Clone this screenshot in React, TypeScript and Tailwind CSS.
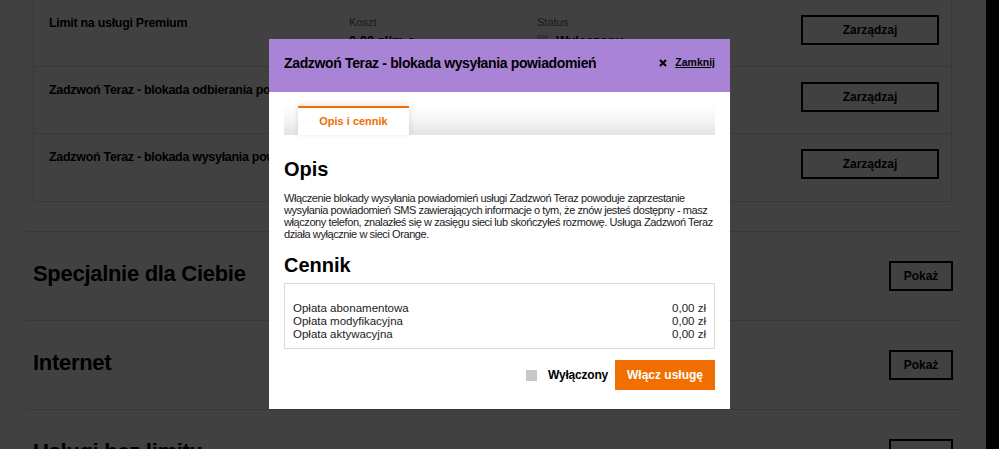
import React from 'react';

const font = { fontFamily: '"Liberation Sans", Arial, sans-serif' };

const services = [
  { title: 'Limit na usługi Premium', showMeta: true },
  { title: 'Zadzwoń Teraz - blokada odbierania powiadomień', showMeta: false },
  { title: 'Zadzwoń Teraz - blokada wysyłania powiadomień', showMeta: false },
];

const sections = ['Specjalnie dla Ciebie', 'Internet', 'Usługi bez limitu'];

const prices = [
  { label: 'Opłata abonamentowa', value: '0,00 zł' },
  { label: 'Opłata modyfikacyjna', value: '0,00 zł' },
  { label: 'Opłata aktywacyjna', value: '0,00 zł' },
];

const App: React.FC = () => {
  return (
    <div className="relative flex h-[449px] w-[999px] overflow-hidden bg-white text-black" style={font}>
      {/* Page underneath */}
      <div className="w-[986px] shrink-0">
        <div className="ml-[25px] w-[935px]">
          {/* Services box */}
          <div className="mx-2 border-x border-b border-[#dcdcdc]">
            {services.map((s, i) => (
              <div key={i} className="flex h-[67px] border-b border-[#dcdcdc] last:border-b-0 pl-[15px]">
                <div className="w-[300px] pt-[14px] text-[12.5px] font-bold tracking-[-0.3px] whitespace-nowrap">{s.title}</div>
                <div className="w-[188px] pt-[14px]">
                  {s.showMeta && (
                    <>
                      <div className="text-[11px] text-[#666]">Koszt</div>
                      <div className="text-[13px] font-bold">0,00 zł/m-c</div>
                    </>
                  )}
                </div>
                <div className="w-[264px] pt-[14px]">
                  {s.showMeta && (
                    <>
                      <div className="text-[11px] text-[#666]">Status</div>
                      <div className="flex items-center gap-2 text-[13px] font-bold">
                        <span className="h-[11px] w-[11px] bg-[#ccc]" />
                        Wyłączony
                      </div>
                    </>
                  )}
                </div>
                <div className="pt-[15px]">
                  <button className="h-[30px] w-[138px] border-2 border-black text-[12px] font-bold">Zarządzaj</button>
                </div>
              </div>
            ))}
          </div>

          {/* Sections */}
          <div className="mt-[29px]">
            {sections.map((s) => (
              <div key={s} className="flex h-[89px] items-start justify-between border-t border-[#dcdcdc] pl-2 pr-[7px] pt-[29px]">
                <h2 className="text-[22px] font-bold leading-[26px] tracking-[-0.3px]">{s}</h2>
                <button className="h-[30px] w-[64px] border-2 border-black text-[12px] font-bold">Pokaż</button>
              </div>
            ))}
          </div>
        </div>
      </div>
      <div className="w-[13px] shrink-0 bg-black" />

      {/* Overlay */}
      <div className="absolute inset-0 bg-black/[0.745]" />
      <div className="absolute right-0 top-0 h-full w-[13px] bg-black" />

      {/* Modal */}
      <div className="absolute left-[269px] top-[39px] flex h-[370px] w-[461px] flex-col bg-white">
        <div className="flex h-[53px] items-center justify-between bg-[#a984d6] px-[15px] pb-[5px]">
          <h1 className="text-[14px] font-bold tracking-[-0.35px]">Zadzwoń Teraz - blokada wysyłania powiadomień</h1>
          <button className="flex items-center gap-[8px] text-[10.5px] font-bold">
            <svg width="8" height="8" viewBox="0 0 8 8">
              <path d="M1 1 L7 7 M7 1 L1 7" stroke="black" strokeWidth="2" />
            </svg>
            <span className="underline">Zamknij</span>
          </button>
        </div>

        <div className="px-[15px]">
          {/* Tabs */}
          <div className="mt-[14px] flex h-[29px] bg-gradient-to-b from-white via-[#f4f4f4] to-[#e3e3e3] pl-[14px]">
            <div className="flex h-[29px] w-[111px] items-center justify-center border-t-2 border-[#f16e00] bg-white text-[11px] font-bold text-[#f16e00] shadow-[0_-1px_6px_rgba(0,0,0,0.12)]">
              Opis i cennik
            </div>
          </div>

          <h2 className="mt-[22px] text-[20px] font-bold leading-[24px]">Opis</h2>
          <p className="mt-[11px] text-[11px] leading-[12px] tracking-[-0.42px] text-[#222]">
            Włączenie blokady wysyłania powiadomień usługi Zadzwoń Teraz powoduje zaprzestanie wysyłania powiadomień SMS zawierających informacje o tym, że znów jesteś dostępny - masz włączony telefon, znalazłeś się w zasięgu sieci lub skończyłeś rozmowę. Usługa Zadzwoń Teraz działa wyłącznie w sieci Orange.
          </p>

          <h2 className="mt-[13px] text-[20px] font-bold leading-[24px]">Cennik</h2>
          <div className="mt-[6px] border border-[#dcdcdc] px-[8px] pb-[7px] pt-[18px] text-[11.5px] leading-[13px] text-[#222]">
            {prices.map((p) => (
              <div key={p.label} className="flex justify-between">
                <span>{p.label}</span>
                <span>{p.value}</span>
              </div>
            ))}
          </div>

          <div className="mt-[11px] flex items-center justify-end">
            <span className="h-[11px] w-[11px] bg-[#c8c8c8]" />
            <span className="ml-[11px] mr-[7px] text-[12px] font-bold tracking-[-0.2px]">Wyłączony</span>
            <button className="h-[30px] w-[100px] bg-[#f16e00] text-[12px] font-bold text-white">Włącz usługę</button>
          </div>
        </div>
      </div>
    </div>
  );
};

export default App;
